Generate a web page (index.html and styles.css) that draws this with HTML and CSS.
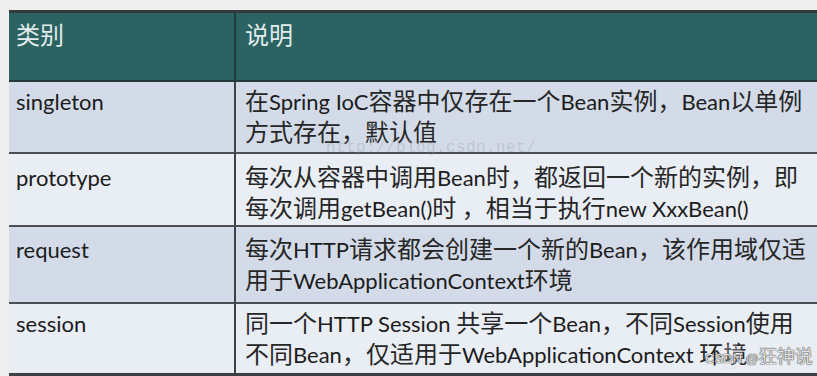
FILE: index.html
```html
<!DOCTYPE html>
<html lang="zh">
<head>
<meta charset="utf-8">
<title>Bean作用域</title>
<link rel="stylesheet" href="styles.css">
</head>
<body>
<div class="sheet">
  <div class="grid">
    <div class="cell head c1">类别</div>
    <div class="cell head c2">说明</div>

    <div class="cell odd c1 r1"><span class="en">singleton</span></div>
    <div class="cell odd c2 r1">在<span class="en">Spring IoC</span>容器中仅存在一个<span class="en">Bean</span>实例，<span class="en">Bean</span>以单例<br>方式存在，默认值</div>

    <div class="cell even c1 r2"><span class="en">prototype</span></div>
    <div class="cell even c2 r2">每次从容器中调用<span class="en">Bean</span>时，都返回一个新的实例，即<br>每次调用<span class="en">getBean()</span>时 ，相当于执行<span class="en">new XxxBean()</span></div>

    <div class="cell odd c1 r3"><span class="en">request</span></div>
    <div class="cell odd c2 r3">每次<span class="en">HTTP</span>请求都会创建一个新的<span class="en">Bean</span>，该作用域仅适<br>用于<span class="en">WebApplicationContext</span>环境</div>

    <div class="cell even c1 r4"><span class="en">session</span></div>
    <div class="cell even c2 r4">同一个<span class="en">HTTP Session </span>共享一个<span class="en">Bean</span>，不同<span class="en">Session</span>使用<br>不同<span class="en">Bean</span>，仅适用于<span class="en">WebApplicationContext </span>环境</div>
  </div>
  <div class="wm-url">http://blog.csdn.net/</div>
  <div class="wm-csdn"><span class="wm-logo"></span><span class="wm-en">CSDN @</span>狂神说</div>
</div>
</body>
</html>
```

FILE: styles.css
```css
html, body {
  margin: 0;
  padding: 0;
  background: #efefef;
  overflow: hidden;
}
.sheet {
  position: relative;
  width: 817px;
  height: 376px;
  padding: 10px 0 0 9px;
  box-sizing: border-box;
  font-family: "Noto Sans CJK SC", sans-serif;
  font-size: 24px;
  line-height: 29px;
  color: #262626;
}
.en {
  font-family: "Lato", "Noto Sans CJK SC", sans-serif;
  font-size: 22px;
  color: #1c1c1c;
}
.grid {
  display: grid;
  grid-template-columns: 227px 1fr;
  border-top: 3px solid #34393a;
  border-bottom: 3px solid #3c4043;
}
.cell {
  white-space: nowrap;
  box-sizing: border-box;
  border-bottom: 2px solid #4b4f55;
}
.c1 {
  padding-left: 7px;
  border-right: 2px solid #3e4245;
}
.c2 {
  padding-left: 9px;
}
.head {
  height: 69px;
  padding-top: 6px;
  background: #2b6363;
  color: #e3ecec;
  border-bottom-color: #243a3a;
}
.head.c1 { border-right-color: #223b3b; }
.odd { background: #d3dbe8; }
.even { background: #e9edf4; }
.r1 { height: 72px; padding-top: 3px; }
.r2 { height: 73px; padding-top: 7px; }
.r3 { height: 77px; padding-top: 6px; }
.r4 { height: 69px; padding-top: 3px; border-bottom: none; }
.wm-url {
  position: absolute;
  left: 326px;
  top: 138px;
  font-family: "Liberation Mono", monospace;
  font-size: 16px;
  line-height: 20px;
  color: rgba(150, 155, 165, 0.35);
  letter-spacing: 0.4px;
}
.wm-csdn {
  position: absolute;
  left: 705px;
  top: 343px;
  font-family: "Noto Sans CJK SC", sans-serif;
  font-size: 18px;
  line-height: 24px;
  color: rgba(255, 255, 255, 0.85);
  text-shadow: 0 0 1px #555, 0 0 1px #555, 0 0 1px #555;
  white-space: nowrap;
}
.wm-en {
  position: relative;
  font-family: "Liberation Sans", sans-serif;
  font-size: 13px;
}
.wm-logo {
  position: absolute;
  left: 14px;
  top: 1px;
  width: 24px;
  height: 24px;
  border-radius: 50%;
  background: rgba(255, 255, 255, 0.25);
  box-shadow: 0 0 1px rgba(120, 120, 120, 0.4);
}
```
